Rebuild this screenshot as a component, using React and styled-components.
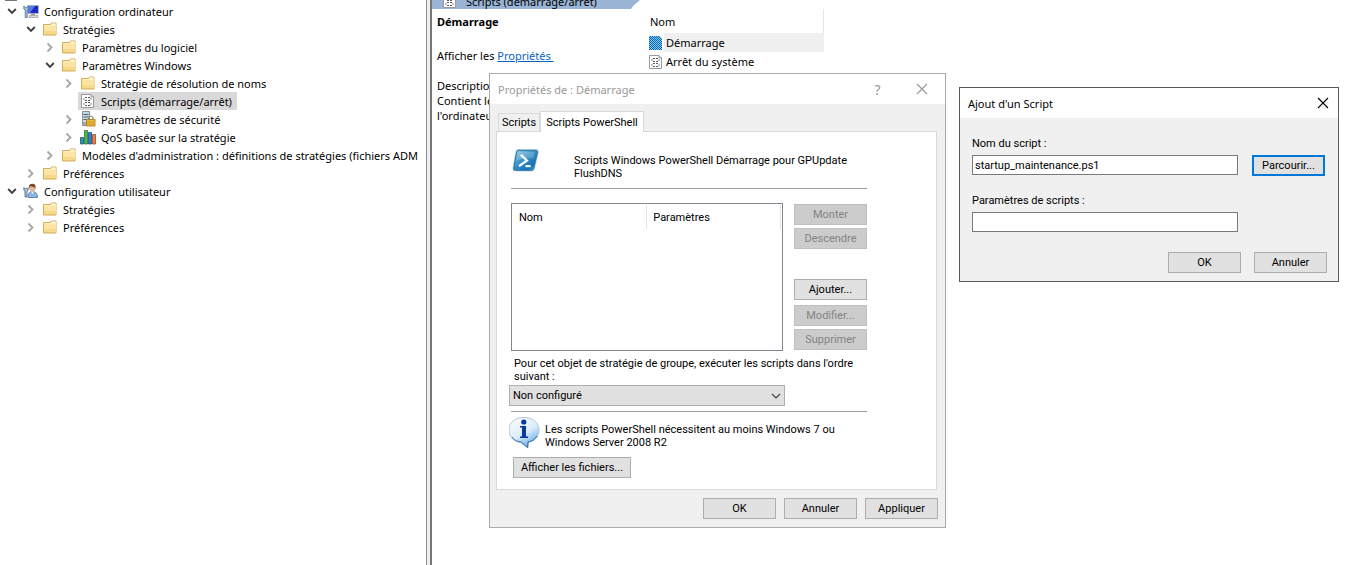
import React, { useState } from 'react';
import styled, { createGlobalStyle, css } from 'styled-components';

const GlobalStyle = createGlobalStyle`
  * {
    box-sizing: border-box;
  }
  body {
    margin: 0;
    background: #fff;
    overflow: hidden;
  }
`;

const shellFont = css`
  font-family: Roboto, 'Liberation Sans', Arial, sans-serif;
  font-size: 11px;
  line-height: 13px;
`;

const Desktop = styled.main`
  position: relative;
  display: flex;
  min-height: 100vh;
  overflow: hidden;
  background: #fff;
  color: #000;
  font-family: 'Noto Sans', 'Open Sans', sans-serif;
  font-size: 11px;
  line-height: 15px;
`;

/* ---------- tree ---------- */

const TreePane = styled.nav`
  flex: 0 0 426px;
  overflow: hidden;
`;

const RootRow = styled.div`
  display: flex;
  align-items: flex-end;
  height: 2px;
  padding-left: 5px;
  overflow: hidden;
`;

const TreeRow = styled.div`
  display: flex;
  align-items: center;
  height: 18px;
  padding-left: ${(props) => 6 + props.$depth * 19}px;
  white-space: nowrap;
`;

const Toggle = styled.button`
  flex: none;
  display: flex;
  align-items: center;
  justify-content: center;
  width: 12px;
  height: 12px;
  margin-right: 3px;
  padding: 0;
  border: 0;
  background: none;
`;

const ToggleSpace = styled.span`
  flex: none;
  width: 15px;
`;

const TreeLabel = styled.span`
  display: flex;
  align-items: center;
  gap: 5px;
  height: 18px;
  padding: 0 5px 0 2px;
  background: ${(props) => (props.$selected ? '#d9d9d9' : 'transparent')};
`;

const Splitter = styled.div`
  flex: 0 0 6px;
  border-left: 1px solid #8c8c8c;
  border-right: 2px solid #777;
  background: #f0f0f0;
`;

/* ---------- details ---------- */

const DetailsPane = styled.section`
  flex: 1;
  min-width: 0;
`;

const DetailsHeader = styled.div`
  display: flex;
  align-items: flex-end;
  gap: 8px;
  width: 208px;
  height: 9px;
  padding-left: 10px;
  overflow: hidden;
  background: #9ab4d5;
  clip-path: polygon(0 0, 100% 0, 201px 6px, 199px 100%, 0 100%);
`;

const DetailsBody = styled.div`
  display: flex;
`;

const Description = styled.div`
  flex: 0 0 216px;
  padding: 5px 0 0 5px;
`;

const DescriptionTitle = styled.h1`
  margin: 0 0 19px;
  font-size: 11px;
  line-height: 15px;
`;

const DescriptionText = styled.p`
  margin: 0 0 15px;
`;

const PropertyLink = styled.a`
  color: #0563c1;
  text-decoration: underline;
  white-space: pre;
`;

const ScriptList = styled.table`
  width: 176px;
  height: fit-content;
  border-collapse: collapse;
`;

const ScriptHead = styled.th`
  height: 24px;
  padding: 0 2px;
  border-right: 1px solid #e5e5e5;
  font-weight: normal;
  text-align: left;
`;

const ScriptCell = styled.td`
  padding: 0;
`;

const ScriptItem = styled.div`
  display: flex;
  align-items: center;
  height: 19px;
`;

const ScriptName = styled.span`
  flex: 1;
  height: 19px;
  padding-left: 2px;
  line-height: 19px;
  background: ${(props) => (props.$selected ? '#f0f0f0' : 'transparent')};
`;

/* ---------- windows ---------- */

const Window = styled.section`
  position: absolute;
  left: ${(props) => props.$x}px;
  top: ${(props) => props.$y}px;
  width: ${(props) => props.$width}px;
  border: 1px solid ${(props) => (props.$active ? '#5a5a5a' : '#aaa')};
  background: #f0f0f0;
  ${shellFont}
`;

const TitleBar = styled.header`
  display: flex;
  align-items: center;
  gap: 8px;
  height: 30px;
  padding: 0 9px 0 8px;
  background: #fff;
  color: ${(props) => (props.$active ? '#000' : '#999')};
`;

const WindowTitle = styled.h2`
  flex: 1;
  margin: 0;
  font-family: 'Noto Sans', 'Open Sans', sans-serif;
  font-size: 11px;
  font-weight: normal;
  line-height: 15px;
`;

const TitleButton = styled.button`
  display: flex;
  align-items: center;
  justify-content: center;
  width: ${(props) => props.$width || 12}px;
  height: 20px;
  padding: 0;
  border: 0;
  background: none;
  color: inherit;
  font-family: 'Noto Sans', 'Open Sans', sans-serif;
  font-size: 14px;
`;

const Button = styled.button`
  flex: none;
  width: ${(props) => props.$width || 73}px;
  height: 21px;
  padding: 0;
  border: 1px solid #adadad;
  background: #e1e1e1;
  color: #000;
  ${shellFont}
  &:disabled {
    border-color: #bfbfbf;
    background: #ccc;
    color: #838383;
  }
  ${(props) => props.$focused && css`
    border: 2px solid #0078d7;
  `}
`;

const ButtonRow = styled.div`
  display: flex;
  justify-content: flex-end;
  gap: ${(props) => props.$gap}px;
`;

const PropertiesBody = styled.div`
  padding: 7px 7px 8px 6px;
`;

const TabList = styled.div`
  display: flex;
  align-items: flex-end;
  padding-left: 2px;
`;

const Tab = styled.button`
  position: relative;
  height: ${(props) => (props.$active ? 21 : 18)}px;
  margin-bottom: ${(props) => (props.$active ? -1 : 0)}px;
  padding: ${(props) => (props.$active ? '0 5px' : '0 3px')};
  border: 1px solid #d9d9d9;
  border-bottom: 0;
  background: ${(props) => (props.$active ? '#fff' : '#f0f0f0')};
  color: #000;
  ${shellFont}
`;

const TabPage = styled.div`
  margin: 0 1px 8px 0;
  padding: 16px 69px 11px 12px;
  border: 1px solid #d9d9d9;
  background: #fff;
`;

const Intro = styled.div`
  display: flex;
  gap: 34px;
  height: 40px;
  padding-left: 3px;
`;

const IntroText = styled.p`
  margin: 6px 0 0;
`;

const Rule = styled.hr`
  margin: 0 0 0 2px;
  border: 0;
  border-top: 1px solid #a0a0a0;
`;

const ListArea = styled.div`
  display: flex;
  justify-content: space-between;
  margin: 14px 0 6px 2px;
`;

const ListBox = styled.div`
  width: 272px;
  height: 148px;
  padding: 1px;
  border: 1px solid #828790;
`;

const ParamTable = styled.table`
  width: 268px;
  border-collapse: collapse;
  table-layout: fixed;
`;

const ParamHead = styled.th`
  width: 50%;
  height: 24px;
  padding: 0 6px;
  border-right: 1px solid #e5e5e5;
  font-weight: normal;
  text-align: left;
`;

const ButtonStack = styled.div`
  display: flex;
  flex-direction: column;
  gap: 3px;
  padding-top: 1px;
`;

const StackBreak = styled.div`
  height: 24px;
`;

const EditButtons = styled.div`
  display: flex;
  flex-direction: column;
  gap: 3px;
  padding-top: 2px;
`;

const OrderLabel = styled.label`
  display: block;
  margin: 0 0 2px 5px;
`;

const SelectBox = styled.div`
  position: relative;
  width: 276px;
  margin-bottom: 5px;
`;

const Select = styled.select`
  display: block;
  width: 100%;
  height: 21px;
  padding: 0 20px 0 3px;
  border: 1px solid #adadad;
  border-radius: 0;
  background: #e1e1e1;
  color: #000;
  appearance: none;
  ${shellFont}
`;

const SelectArrow = styled.svg`
  position: absolute;
  top: 8px;
  right: 4px;
  pointer-events: none;
`;

const Notice = styled.div`
  display: flex;
  gap: 4px;
  height: 45px;
  padding-top: 4px;
`;

const NoticeText = styled.p`
  margin: 7px 0 0;
`;

const FilesButton = styled(Button)`
  margin-left: 4px;
`;

const ScriptForm = styled.form`
  padding: 19px 11px 8px 12px;
`;

const Field = styled.div`
  display: grid;
  grid-template-columns: 266px 73px;
  column-gap: 14px;
  row-gap: 5px;
  margin-bottom: ${(props) => props.$bottom}px;
`;

const FieldLabel = styled.label`
  grid-column: 1 / -1;
`;

const TextInput = styled.input`
  height: 20px;
  padding: 0 2px;
  border: 1px solid #7a7a7a;
  border-radius: 0;
  background: #fff;
  color: #000;
  outline: 0;
  ${shellFont}
`;

/* ---------- icons ---------- */

const ExpandedIcon = () => (
  <svg width="10" height="8" viewBox="0 0 10 8" fill="none">
    <path d="M1.200 2 5 5.800 8.800 2" stroke="#404040" strokeWidth="1.900" />
  </svg>
);

const CollapsedIcon = () => (
  <svg width="8" height="12" viewBox="0 0 8 12" fill="none">
    <path d="M1.500 2.500 5.500 6.500 1.500 10.500" stroke="#a6a6a6" strokeWidth="1.800" />
  </svg>
);

const FolderIcon = () => (
  <svg width="16" height="16" viewBox="0 0 16 16">
    <path d="M1.500 3.500h7l1-1.500h4.500v12H1.500z" fill="#f6d684" stroke="#d3ad58" />
    <path d="M10 2.500h3.500v1.500H9z" fill="#fffbe6" />
    <path d="M2 5h12v5H2z" fill="#fce5a4" />
    <path d="M2 10h12v3H2z" fill="#f7d98c" />
    <path d="M2 4.500h12" stroke="#fff0bd" />
  </svg>
);

const ComputerIcon = () => (
  <svg width="16" height="16" viewBox="0 0 16 16">
    <path d="M4.500 2.500h11v8h-11z" fill="#dfe2e8" stroke="#a9afb9" />
    <path d="M5 3h10v7H5z" fill="#1b2bc4" />
    <path d="M5 3h7L7 10H5z" fill="#5878ea" />
    <path d="M8 11h4v1.500H8z" fill="#8e949c" />
    <path d="M6 12.500h9v2H6z" fill="#d3d6db" stroke="#8d939b" strokeWidth=".6" />
    <path d="M.8 3v3l1.400 1v7.500h2V7L5.600 6V3L4.300 4.400 3.200 4.600 2.200 4.400z" fill="#a9bfd7" stroke="#55769c" strokeWidth=".8" />
  </svg>
);

const UserIcon = () => (
  <svg width="16" height="16" viewBox="0 0 16 16">
    <path d="M5 14.500c0-4 1.500-6 4.500-6s5 2 5 6z" fill="#8bb5df" stroke="#4774a8" strokeWidth=".8" />
    <path d="M8 8.500 9.500 11 11 8.500z" fill="#fff" />
    <circle cx="9.300" cy="5" r="3.300" fill="#e2b491" />
    <path d="M6 5c-.5-3 1-4.300 3.500-4.300S13 2.500 12.500 5.500C11.500 3.500 8.500 4 7.500 3z" fill="#76482d" />
    <path d="M.8 4.500v2.500l1.200 1v6h2V8l1.200-1V4.500L4 5.700H2z" fill="#b4c3d6" stroke="#48688e" strokeWidth=".8" />
  </svg>
);

const ScriptIcon = () => (
  <svg width="16" height="16" viewBox="-1 0 16 16" fill="none">
    <path d="M.5 1.500h9.500l2.500 2.500v10.500H.5z" fill="#fff" stroke="#9a9a9a" />
    <path d="M10 1.500V4h2.500" stroke="#9a9a9a" />
    <path d="M4 4.500h5M4 7.500h5M4 9.500h5M4 12.500h5" stroke="#555" strokeDasharray="2 1" />
    <path d="M3.500 5 2.500 6l1 1M9.500 5l1 1-1 1M3.500 10l-1 1 1 1M9.500 10l1 1-1 1" stroke="#777" strokeWidth=".9" />
  </svg>
);

const SelectedScriptIcon = () => (
  <svg width="16" height="16" viewBox="-1 0 16 16" shapeRendering="crispEdges">
    <defs>
      <pattern id="dither" width="2" height="2" patternUnits="userSpaceOnUse">
        <rect width="2" height="2" fill="#8ec3e8" />
        <path d="M0 0h1v1H0zM1 1h1v1H1z" fill="#0068b8" />
      </pattern>
    </defs>
    <path d="M0 1h10l3 3v11H0z" fill="url(#dither)" />
  </svg>
);

const SecurityIcon = () => (
  <svg width="16" height="16" viewBox="0 0 16 16">
    <path d="M2.500.5h7v14h-7z" fill="#cfd8de" stroke="#84949c" />
    <path d="M3.500 3.500h5M3.500 6h5M3.500 8.500h3" stroke="#4c626e" />
    <path d="M3 11h4v3H3z" fill="#9aabb3" />
    <path d="M8.500 9V7.500c0-3 4.500-3 4.500 0V9" fill="none" stroke="#8f8f84" strokeWidth="1.200" />
    <path d="M6.500 8.500h8.500v6.500H6.500z" fill="#edb93b" stroke="#a67516" strokeWidth=".8" />
    <path d="M7 11h7.500M7 13h7.500" stroke="#c68f24" strokeWidth=".7" />
  </svg>
);

const QosIcon = () => (
  <svg width="16" height="16" viewBox="0 0 16 16">
    <path d="M.5 8.500h3v6.500h-3z" fill="#1f9fa8" stroke="#17405e" strokeWidth=".7" />
    <path d="M4.500 1.500h3v13.500h-3z" fill="#4bb84c" stroke="#1d6330" strokeWidth=".7" />
    <path d="M8.500 3.500h3v11.500h-3z" fill="#2a82dc" stroke="#143b68" strokeWidth=".7" />
    <path d="M12.500 5.500h3v9.500h-3z" fill="#ee8148" stroke="#84391f" strokeWidth=".7" />
  </svg>
);

const CloseIcon = () => (
  <svg width="12" height="12" viewBox="0 0 12 12" fill="none">
    <path d="M1 1 11 11M11 1 1 11" stroke="currentColor" strokeWidth="1.100" />
  </svg>
);

const PowerShellIcon = () => (
  <svg width="28" height="26" viewBox="1 0 30 26" fill="none">
    <defs>
      <linearGradient id="psFill" x1="0" y1="0" x2="1" y2="1">
        <stop offset="0" stopColor="#8bc9e7" />
        <stop offset=".45" stopColor="#378fc4" />
        <stop offset=".75" stopColor="#1672b8" />
        <stop offset="1" stopColor="#46afe2" />
      </linearGradient>
    </defs>
    <path d="M7.500 1.500h19c1.500 0 2.200 1 1.900 2.300l-4 17c-.3 1.300-1.200 2.200-2.700 2.200h-17c-1.500 0-2.200-1-1.900-2.300l3-17C6 2.400 6.500 1.500 7.500 1.500z" stroke="#b7d9eb" strokeWidth="2.600" />
    <path d="M7.500 1.500h19c1.500 0 2.200 1 1.900 2.300l-4 17c-.3 1.300-1.200 2.200-2.700 2.200h-17c-1.500 0-2.200-1-1.900-2.300l3-17C6 2.400 6.500 1.500 7.500 1.500z" fill="url(#psFill)" stroke="#32749d" />
    <path d="M7.500 3h18l-1.500 7.500c-6-1-12 0-18 2z" fill="#fff" opacity=".2" />
    <path d="M10.500 6.500 17 12.500 8.500 18.500M15.500 18.500h5.500" stroke="#fff" strokeWidth="2.400" />
  </svg>
);

const InfoIcon = () => (
  <svg width="32" height="33" viewBox="1 0 32 33">
    <defs>
      <linearGradient id="infoFill" x1="0" y1="0" x2=".6" y2="1">
        <stop offset="0" stopColor="#fff" />
        <stop offset=".6" stopColor="#dcecf9" />
        <stop offset="1" stopColor="#6daee5" />
      </linearGradient>
    </defs>
    <path d="M16 1.500C7.500 1.500 1 6.500 1 14s5 11.500 11.500 12.500L20 32l.5-5.700C27 25 31 20.500 31 14 31 6.500 24.500 1.500 16 1.500z" fill="url(#infoFill)" stroke="#b3c6d9" />
    <path d="M4 21c3 4 6 4.500 9.500 5.200l6 5.300.5-5.500c4-.8 7-2.500 9-6" fill="none" stroke="#326ca8" />
    <circle cx="15.800" cy="6" r="2.600" fill="#0738a0" />
    <path d="M12 10h6v10.500h2V22h-8v-1.500h2V11.500h-2z" fill="#0738a0" />
  </svg>
);

const icons = {
  computer: ComputerIcon,
  user: UserIcon,
  folder: FolderIcon,
  script: ScriptIcon,
  security: SecurityIcon,
  qos: QosIcon,
};

const treeItems = [
  { text: 'Configuration ordinateur', depth: 0, icon: 'computer', open: true },
  { text: 'Stratégies', depth: 1, icon: 'folder', open: true },
  { text: 'Paramètres du logiciel', depth: 2, icon: 'folder' },
  { text: 'Paramètres Windows', depth: 2, icon: 'folder', open: true },
  { text: 'Stratégie de résolution de noms', depth: 3, icon: 'folder' },
  { text: 'Scripts (démarrage/arrêt)', depth: 3, icon: 'script', leaf: true, selected: true },
  { text: 'Paramètres de sécurité', depth: 3, icon: 'security' },
  { text: 'QoS basée sur la stratégie', depth: 3, icon: 'qos' },
  { text: "Modèles d'administration : définitions de stratégies (fichiers ADM", depth: 2, icon: 'folder' },
  { text: 'Préférences', depth: 1, icon: 'folder' },
  { text: 'Configuration utilisateur', depth: 0, icon: 'user', open: true },
  { text: 'Stratégies', depth: 1, icon: 'folder' },
  { text: 'Préférences', depth: 1, icon: 'folder' },
];

const Tree = () => (
  <TreePane>
    <RootRow>
      <svg width="12" height="2" viewBox="0 0 12 2">
        <path d="M0 0h12v1H0z" fill="#777" />
      </svg>
    </RootRow>
    {treeItems.map((item, i) => {
      const Icon = icons[item.icon];
      return (
        <TreeRow key={i} $depth={item.depth}>
          {item.leaf ? <ToggleSpace /> : (
            <Toggle aria-label={item.text} aria-expanded={!!item.open}>
              {item.open ? <ExpandedIcon /> : <CollapsedIcon />}
            </Toggle>
          )}
          <TreeLabel $selected={item.selected}>
            <Icon />
            {item.text}
          </TreeLabel>
        </TreeRow>
      );
    })}
  </TreePane>
);

const Details = () => (
  <DetailsPane>
    <DetailsHeader>
      <ScriptIcon />
      <span>Scripts (démarrage/arrêt)</span>
    </DetailsHeader>
    <DetailsBody>
      <Description>
        <DescriptionTitle>Démarrage</DescriptionTitle>
        <DescriptionText>
          Afficher les <PropertyLink href="#proprietes">{'Propriétés '}</PropertyLink>
        </DescriptionText>
        <DescriptionText>
          Description :<br />
          Contient les scripts de<br />
          l'ordinateur.
        </DescriptionText>
      </Description>
      <ScriptList>
        <thead>
          <tr><ScriptHead>Nom</ScriptHead></tr>
        </thead>
        <tbody>
          <tr>
            <ScriptCell>
              <ScriptItem>
                <SelectedScriptIcon />
                <ScriptName $selected>Démarrage</ScriptName>
              </ScriptItem>
            </ScriptCell>
          </tr>
          <tr>
            <ScriptCell>
              <ScriptItem>
                <ScriptIcon />
                <ScriptName>Arrêt du système</ScriptName>
              </ScriptItem>
            </ScriptCell>
          </tr>
        </tbody>
      </ScriptList>
    </DetailsBody>
  </DetailsPane>
);

const PropertiesWindow = () => (
  <Window $x={489} $y={73} $width={457}>
    <TitleBar>
      <WindowTitle>Propriétés de : Démarrage</WindowTitle>
      <TitleButton $width={45}>?</TitleButton>
      <TitleButton $width={28} aria-label="Fermer"><CloseIcon /></TitleButton>
    </TitleBar>
    <PropertiesBody>
      <TabList role="tablist">
        <Tab role="tab">Scripts</Tab>
        <Tab role="tab" aria-selected="true" $active>Scripts PowerShell</Tab>
      </TabList>
      <TabPage>
        <Intro>
          <PowerShellIcon />
          <IntroText>
            Scripts Windows PowerShell Démarrage pour GPUpdate<br />
            FlushDNS
          </IntroText>
        </Intro>
        <Rule />
        <ListArea>
          <ListBox>
            <ParamTable>
              <thead>
                <tr>
                  <ParamHead>Nom</ParamHead>
                  <ParamHead>Paramètres</ParamHead>
                </tr>
              </thead>
            </ParamTable>
          </ListBox>
          <ButtonStack>
            <Button disabled>Monter</Button>
            <Button disabled>Descendre</Button>
            <StackBreak />
            <Button>Ajouter...</Button>
            <EditButtons>
              <Button disabled>Modifier...</Button>
              <Button disabled>Supprimer</Button>
            </EditButtons>
          </ButtonStack>
        </ListArea>
        <OrderLabel htmlFor="order">
          Pour cet objet de stratégie de groupe, exécuter les scripts dans l'ordre<br />
          suivant :
        </OrderLabel>
        <SelectBox>
          <Select id="order">
            <option>Non configuré</option>
          </Select>
          <SelectArrow width="10" height="6" viewBox="0 0 10 6" fill="none">
            <path d="M1 1 5 5 9 1" stroke="#444" strokeWidth="1.200" />
          </SelectArrow>
        </SelectBox>
        <Rule />
        <Notice>
          <InfoIcon />
          <NoticeText>
            Les scripts PowerShell nécessitent au moins Windows 7 ou<br />
            Windows Server 2008 R2
          </NoticeText>
        </Notice>
        <FilesButton $width={118}>Afficher les fichiers...</FilesButton>
      </TabPage>
      <ButtonRow $gap={8}>
        <Button>OK</Button>
        <Button>Annuler</Button>
        <Button>Appliquer</Button>
      </ButtonRow>
    </PropertiesBody>
  </Window>
);

const AddScriptWindow = () => {
  const [name, setName] = useState('startup_maintenance.ps1');
  const [params, setParams] = useState('');

  return (
    <Window $x={959} $y={87} $width={380} $active>
      <TitleBar $active>
        <WindowTitle>Ajout d'un Script</WindowTitle>
        <TitleButton aria-label="Fermer"><CloseIcon /></TitleButton>
      </TitleBar>
      <ScriptForm onSubmit={(e) => e.preventDefault()}>
        <Field $bottom={18}>
          <FieldLabel htmlFor="name">Nom du script :</FieldLabel>
          <TextInput id="name" value={name} onChange={(e) => setName(e.target.value)} />
          <Button type="button" $focused>Parcourir...</Button>
        </Field>
        <Field $bottom={20}>
          <FieldLabel htmlFor="params">Paramètres de scripts :</FieldLabel>
          <TextInput id="params" value={params} onChange={(e) => setParams(e.target.value)} />
        </Field>
        <ButtonRow $gap={13}>
          <Button>OK</Button>
          <Button type="button">Annuler</Button>
        </ButtonRow>
      </ScriptForm>
    </Window>
  );
};

const App = () => (
  <Desktop>
    <GlobalStyle />
    <Tree />
    <Splitter />
    <Details />
    <PropertiesWindow />
    <AddScriptWindow />
  </Desktop>
);

export default App;
